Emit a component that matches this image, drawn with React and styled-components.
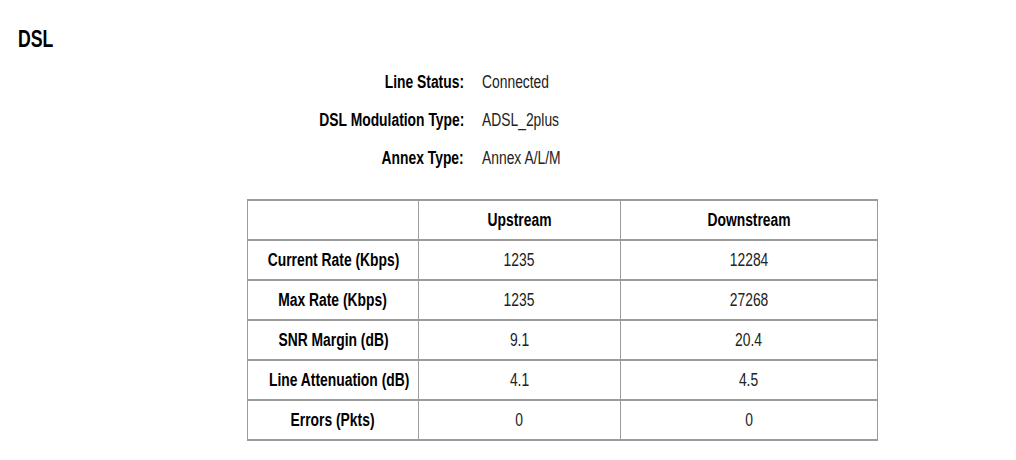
import React from 'react';
import styled, { createGlobalStyle } from 'styled-components';

const GlobalStyle = createGlobalStyle`
  html, body {
    margin: 0;
    padding: 0;
    background: #fff;
  }
  body {
    font-family: "Liberation Sans", Arial, sans-serif;
    color: #000;
  }
`;

const lineInfo = [
    { label: 'Line Status:', value: 'Connected' },
    { label: 'DSL Modulation Type:', value: 'ADSL_2plus' },
    { label: 'Annex Type:', value: 'Annex A/L/M' },
];

const stats = [
    { name: 'Current Rate (Kbps)', up: '1235', down: '12284' },
    { name: 'Max Rate (Kbps)', up: '1235', down: '27268' },
    { name: 'SNR Margin (dB)', up: '9.1', down: '20.4' },
    { name: 'Line Attenuation (dB)', up: '4.1', down: '4.5' },
    { name: 'Errors (Pkts)', up: '0', down: '0' },
];

function App() {
    return (
        <Page>
            <GlobalStyle />
            <Title><Narrow $origin="left">DSL</Narrow></Title>

            <InfoGrid>
                {lineInfo.map((row) => (
                    <React.Fragment key={row.label}>
                        <InfoLabel><Narrow $origin="right">{row.label}</Narrow></InfoLabel>
                        <InfoValue><Narrow $origin="left">{row.value}</Narrow></InfoValue>
                    </React.Fragment>
                ))}
            </InfoGrid>

            <StatsTable>
                <colgroup>
                    <col style={{ width: 171 }} />
                    <col style={{ width: 202 }} />
                    <col style={{ width: 257 }} />
                </colgroup>
                <thead>
                    <tr>
                        <Cell $head />
                        <Cell $head><Narrow>Upstream</Narrow></Cell>
                        <Cell $head><Narrow>Downstream</Narrow></Cell>
                    </tr>
                </thead>
                <tbody>
                    {stats.map((s) => (
                        <tr key={s.name}>
                            <Cell $head><Narrow>{s.name}</Narrow></Cell>
                            <Cell><Narrow>{s.up}</Narrow></Cell>
                            <Cell><Narrow>{s.down}</Narrow></Cell>
                        </tr>
                    ))}
                </tbody>
            </StatsTable>
        </Page>
    );
}

export default App;

const Page = styled.div`
    width: 1016px;
    height: 460px;
    padding-top: 25px;
    box-sizing: border-box;
    overflow: hidden;
`;

// the router page font is a tall, narrow face
const Narrow = styled.span`
    display: inline-block;
    white-space: nowrap;
    transform: scaleX(0.77);
    transform-origin: ${(p) => p.$origin || 'center'};
`;

const Title = styled.h1`
    margin: 0 0 0 18px;
    font-size: 23px;
    line-height: 28px;
    font-weight: bold;
    color: #000;
`;

const InfoGrid = styled.div`
    display: grid;
    grid-template-columns: 464px auto;
    column-gap: 18px;
    grid-auto-rows: 38px;
    margin-top: 10px;
    font-size: 18px;
    line-height: 38px;
`;

const InfoLabel = styled.div`
    text-align: right;
    font-weight: bold;
    color: #000;
`;

const InfoValue = styled.div`
    text-align: left;
    color: #222;
`;

const StatsTable = styled.table`
    margin: 22px 0 0 247px;
    width: 630px;
    border-collapse: collapse;
    table-layout: fixed;
    font-size: 18px;

    tr {
        height: 40px;
    }
`;

const Cell = styled.td`
    border-top: 2px solid #9b9b9b;
    border-bottom: 2px solid #9b9b9b;
    border-left: 1px solid #9b9b9b;
    border-right: 1px solid #9b9b9b;
    padding: 0;
    text-align: center;
    vertical-align: middle;
    font-weight: ${(p) => (p.$head ? 'bold' : 'normal')};
    color: ${(p) => (p.$head ? '#000' : '#222')};
`;
